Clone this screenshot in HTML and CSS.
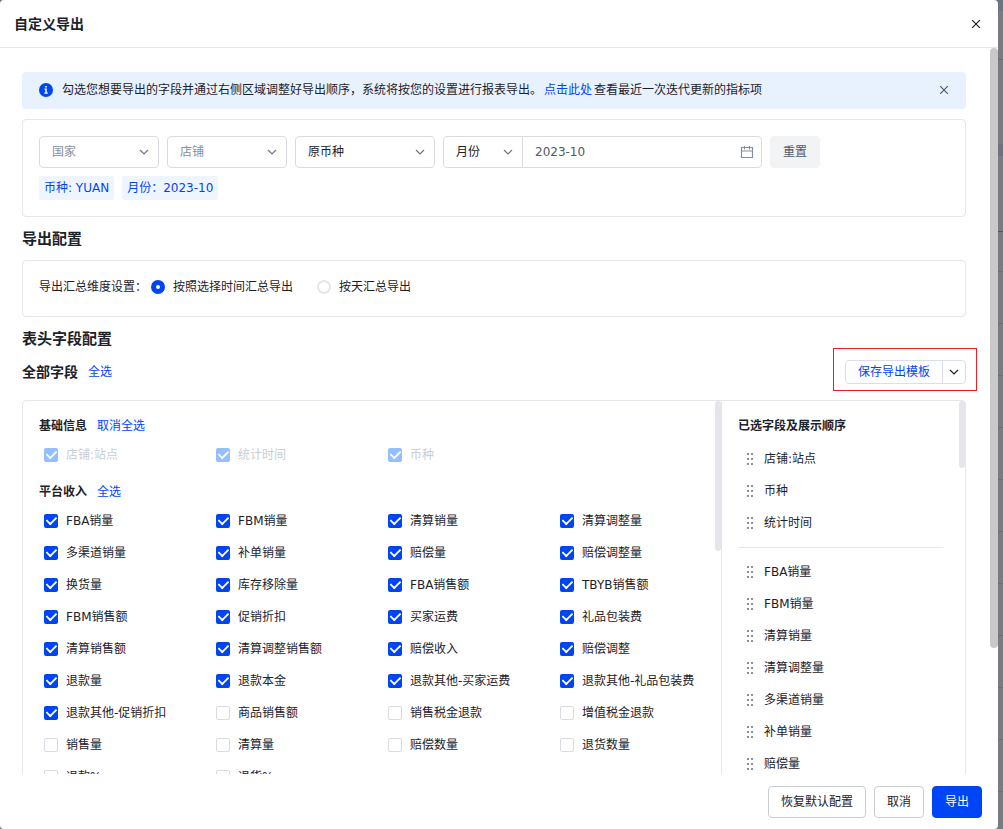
FILE: index.html
```html
<!DOCTYPE html>
<html lang="zh-CN">
<head>
    <meta charset="UTF-8">
    <meta name="viewport" content="width=device-width, initial-scale=1.0">
    <title>自定义导出</title>
    <link rel="stylesheet" href="styles.css">
</head>
<body>

    <svg class="sprite" aria-hidden="true">
        <symbol id="close" viewBox="0 0 10 10"><path d="M1.2 1.2l7.6 7.6M8.8 1.2L1.2 8.8"/></symbol>
        <symbol id="down" viewBox="0 0 10 10"><path d="M1 3l4 4 4-4"/></symbol>
        <symbol id="calendar" viewBox="0 0 14 14"><path d="M1.5 2.5h11v10h-11zM1.5 6h11M4.5 1v3.5M9.5 1v3.5"/></symbol>
    </svg>

    <div class="modal" role="dialog" aria-labelledby="title">
        <header class="modal-header">
            <h1 id="title">自定义导出</h1>
            <button type="button" class="icon-btn" aria-label="关闭"><svg class="icon"><use href="#close"/></svg></button>
        </header>

        <main class="modal-body">
            <div class="content">
                <div class="notice">
                    <svg class="info" viewBox="0 0 14 14"><circle cx="7" cy="7" r="7"/><path d="M6.2 3h1.6v1.6H6.2zM5.5 5.6h2.3v4h1v1.2H5.3V9.6h1V6.8h-.8z"/></svg>
                    <p>勾选您想要导出的字段并通过右侧区域调整好导出顺序，系统将按您的设置进行报表导出。<a href="#">点击此处</a>查看最近一次迭代更新的指标项</p>
                    <button type="button" class="icon-btn muted" aria-label="关闭提示"><svg class="icon"><use href="#close"/></svg></button>
                </div>

                <section class="card filters">
                    <div class="filter-row">
                        <div class="select"><select class="placeholder" aria-label="国家"><option>国家</option></select><svg class="icon"><use href="#down"/></svg></div>
                        <div class="select"><select class="placeholder" aria-label="店铺"><option>店铺</option></select><svg class="icon"><use href="#down"/></svg></div>
                        <div class="select wide"><select aria-label="币种"><option>原币种</option></select><svg class="icon"><use href="#down"/></svg></div>
                        <div class="period">
                            <div class="select unit"><select aria-label="时间单位"><option>月份</option></select><svg class="icon"><use href="#down"/></svg></div>
                            <div class="date"><input type="text" value="2023-10" aria-label="月份"><svg class="icon-calendar"><use href="#calendar"/></svg></div>
                        </div>
                        <button type="button" class="btn-reset">重置</button>
                    </div>
                    <div class="tags">
                        <span class="tag">币种: YUAN</span>
                        <span class="tag">月份：2023-10</span>
                    </div>
                </section>

                <h2>导出配置</h2>
                <section class="card dimension">
                    <span>导出汇总维度设置：</span>
                    <label><input type="radio" name="dimension" checked>按照选择时间汇总导出</label>
                    <label><input type="radio" name="dimension">按天汇总导出</label>
                </section>

                <h2>表头字段配置</h2>
                <div class="toolbar">
                    <h3>全部字段</h3>
                    <a href="#">全选</a>
                    <div class="split-btn">
                        <button type="button" class="save">保存导出模板</button>
                        <button type="button" class="more" aria-label="更多模板"><svg class="icon"><use href="#down"/></svg></button>
                    </div>
                </div>

                <div class="fields">
                    <div class="all-fields">
                        <div class="group-title"><h4>基础信息</h4><a href="#">取消全选</a></div>
                        <div class="checks">
                            <label class="disabled"><input type="checkbox" checked disabled>店铺:站点</label>
                            <label class="disabled"><input type="checkbox" checked disabled>统计时间</label>
                            <label class="disabled"><input type="checkbox" checked disabled>币种</label>
                        </div>
                        <div class="group-title"><h4>平台收入</h4><a href="#">全选</a></div>
                        <div class="checks">
                            <label><input type="checkbox" checked>FBA销量</label>
                            <label><input type="checkbox" checked>FBM销量</label>
                            <label><input type="checkbox" checked>清算销量</label>
                            <label><input type="checkbox" checked>清算调整量</label>
                            <label><input type="checkbox" checked>多渠道销量</label>
                            <label><input type="checkbox" checked>补单销量</label>
                            <label><input type="checkbox" checked>赔偿量</label>
                            <label><input type="checkbox" checked>赔偿调整量</label>
                            <label><input type="checkbox" checked>换货量</label>
                            <label><input type="checkbox" checked>库存移除量</label>
                            <label><input type="checkbox" checked>FBA销售额</label>
                            <label><input type="checkbox" checked>TBYB销售额</label>
                            <label><input type="checkbox" checked>FBM销售额</label>
                            <label><input type="checkbox" checked>促销折扣</label>
                            <label><input type="checkbox" checked>买家运费</label>
                            <label><input type="checkbox" checked>礼品包装费</label>
                            <label><input type="checkbox" checked>清算销售额</label>
                            <label><input type="checkbox" checked>清算调整销售额</label>
                            <label><input type="checkbox" checked>赔偿收入</label>
                            <label><input type="checkbox" checked>赔偿调整</label>
                            <label><input type="checkbox" checked>退款量</label>
                            <label><input type="checkbox" checked>退款本金</label>
                            <label><input type="checkbox" checked>退款其他-买家运费</label>
                            <label><input type="checkbox" checked>退款其他-礼品包装费</label>
                            <label><input type="checkbox" checked>退款其他-促销折扣</label>
                            <label><input type="checkbox">商品销售额</label>
                            <label><input type="checkbox">销售税金退款</label>
                            <label><input type="checkbox">增值税金退款</label>
                            <label><input type="checkbox">销售量</label>
                            <label><input type="checkbox">清算量</label>
                            <label><input type="checkbox">赔偿数量</label>
                            <label><input type="checkbox">退货数量</label>
                            <label><input type="checkbox">退款%</label>
                            <label><input type="checkbox">退货%</label>
                        </div>
                        <div class="thumb thumb-left"></div>
                    </div>

                    <div class="selected">
                        <h4>已选字段及展示顺序</h4>
                        <ul>
                            <li>店铺:站点</li>
                            <li>币种</li>
                            <li>统计时间</li>
                        </ul>
                        <hr>
                        <ul>
                            <li>FBA销量</li>
                            <li>FBM销量</li>
                            <li>清算销量</li>
                            <li>清算调整量</li>
                            <li>多渠道销量</li>
                            <li>补单销量</li>
                            <li>赔偿量</li>
                        </ul>
                        <div class="thumb thumb-right"></div>
                    </div>
                </div>
            </div>
            <div class="scrollbar"></div>
        </main>

        <footer class="modal-footer">
            <button type="button" class="btn">恢复默认配置</button>
            <button type="button" class="btn">取消</button>
            <button type="button" class="btn primary">导出</button>
        </footer>
    </div>

</body>
</html>
```
FILE: styles.css
```css
* {
    box-sizing: border-box;
}
/* dimmed page behind the modal */
body {
    margin: 0;
    height: 100vh;
    padding-right: 5px;
    overflow: hidden;
    background:
        linear-gradient(#6b7480 11px, transparent 11px),
        linear-gradient(transparent 59px, #696c73 59px 60px, transparent 60px 144px, #6f727b 144px 156px, transparent 156px 231px, #1f6d70 231px 232px, transparent 232px),
        repeating-linear-gradient(transparent 0 10px, #6c6f76 10px 11px, transparent 11px 52px) 0 261px no-repeat,
        #787b80;
    color: #1d2129;
    font-family: "DejaVu Sans", "Noto Sans CJK SC", sans-serif;
    font-size: 12px;
    line-height: 18px;
}
h1, h2, h3, h4, p, ul {
    margin: 0;
    padding: 0;
}
h1, h2, h3, h4 {
    font-weight: 600;
}
h1, h3 {
    font-size: 14px;
}
h2 {
    margin: 12px 0 10px;
    font-size: 15px;
    line-height: 21px;
}
h4 {
    font-size: 12px;
}
a {
    color: #0045f5;
    text-decoration: none;
}
button, input, select {
    margin: 0;
    font: inherit;
    color: inherit;
}
button {
    padding: 0;
    cursor: pointer;
}
.sprite {
    display: none;
}
.icon, .icon-calendar {
    display: block;
    flex: none;
    width: 10px;
    height: 10px;
    fill: none;
    stroke: currentColor;
    stroke-width: 1.2;
}
.icon-calendar {
    width: 14px;
    height: 14px;
    color: #86909c;
}
.icon-btn {
    border: none;
    background: none;
}
.icon-btn.muted {
    color: #4e5969;
}

/* modal */
.modal {
    display: flex;
    flex-direction: column;
    height: 100vh;
    background: #fff;
    border-radius: 4px;
}
.modal-header {
    display: flex;
    flex: none;
    align-items: center;
    justify-content: space-between;
    height: 48px;
    padding: 0 17px 0 14px;
    border-bottom: 1px solid #e5e6eb;
}
.modal-body {
    display: flex;
    flex: 1;
    min-height: 0;
    overflow: hidden;
}
.content {
    flex: 1;
    min-width: 0;
    padding: 24px 24px 0 22px;
}
.scrollbar {
    width: 8px;
    height: 600px;
    border-radius: 4px;
    background: #c9c9c9;
}
.modal-footer {
    display: flex;
    flex: none;
    justify-content: flex-end;
    gap: 8px;
    padding: 12px 16px 11px;
}

/* notice */
.notice {
    display: flex;
    align-items: center;
    height: 37px;
    padding: 0 17px 2px;
    border-radius: 4px;
    background: #e8f2ff;
}
.notice p {
    flex: 1;
    margin-left: 9px;
}
.notice a {
    margin: 0 2px;
}
.info {
    width: 14px;
    height: 14px;
    fill: #0045f5;
}
.info path {
    fill: #fff;
}

/* filters */
.card {
    border: 1px solid #e5e6eb;
    border-radius: 4px;
    padding: 16px;
}
.filters {
    margin-top: 10px;
}
.filter-row {
    display: flex;
    gap: 8px;
}
.select, .date {
    position: relative;
    width: 120px;
    height: 32px;
}
.select select, .date input {
    width: 100%;
    height: 100%;
    padding: 0 12px;
    border: 1px solid #d9dbe0;
    border-radius: 4px;
    background: #fff;
    appearance: none;
}
.select .placeholder {
    color: #86909c;
}
.select .icon {
    position: absolute;
    top: 11px;
    right: 10px;
    color: #6b7785;
    pointer-events: none;
}
.select.wide {
    width: 140px;
}
.period {
    display: flex;
}
.select.unit {
    width: 80px;
}
.unit select {
    border-radius: 4px 0 0 4px;
}
.date {
    width: 240px;
    margin-left: -1px;
}
.date input {
    border-radius: 0 4px 4px 0;
    color: #4e5969;
}
.icon-calendar {
    position: absolute;
    top: 9px;
    right: 8px;
}
.btn-reset {
    width: 50px;
    border: none;
    border-radius: 4px;
    background: #f2f3f5;
    color: #4e5969;
}
.tags {
    display: flex;
    gap: 8px;
    margin-top: 8px;
}
.tag {
    padding: 0 5px;
    border-radius: 2px;
    background: #eff5ff;
    color: #0045f5;
    line-height: 24px;
}

/* dimension */
.dimension {
    display: flex;
    padding-bottom: 19px;
    line-height: 20px;
}
.dimension label {
    display: flex;
    align-items: center;
    gap: 8px;
    margin-right: 24px;
}
.dimension span {
    margin-right: 4px;
}
input[type="radio"] {
    appearance: none;
    width: 14px;
    height: 14px;
    border: 2px solid #e5e6eb;
    border-radius: 50%;
}
input[type="radio"]:checked {
    border: 5px solid #0045f5;
}

/* toolbar */
.toolbar {
    display: flex;
    align-items: center;
    gap: 10px;
    margin-bottom: 16px;
}
.split-btn {
    position: relative;
    display: flex;
    height: 24px;
    margin-left: auto;
    border: 1px solid #d9dee8;
    border-radius: 4px;
}
.split-btn::after {
    content: "";
    position: absolute;
    inset: -13px -12px -8px -13px;
    border: 1px solid #ee1c25;
    pointer-events: none;
}
.split-btn button {
    border: none;
    background: none;
}
.split-btn .save {
    padding: 0 12px;
    color: #0045f5;
}
.split-btn .more {
    padding: 0 6px;
    border-left: 1px solid #d9dee8;
}

/* field lists */
.fields {
    display: flex;
    height: 480px;
    border: 1px solid #e5e6eb;
    border-radius: 4px;
}
.all-fields, .selected {
    position: relative;
    padding: 16px 0 0 16px;
    overflow: hidden;
}
.all-fields {
    flex: 1;
    border-right: 1px solid #e5e6eb;
}
.selected {
    width: 243px;
}
.group-title {
    display: flex;
    gap: 10px;
}
.checks {
    display: grid;
    grid-template-columns: repeat(3, 1fr) 161px;
    margin: 4px 0 12px 5px;
}
.group-title + .checks:last-of-type {
    margin-bottom: 0;
}
.checks label {
    display: flex;
    align-items: center;
    gap: 8px;
    height: 32px;
    white-space: nowrap;
}
.checks .disabled {
    color: #c9cdd4;
}
input[type="checkbox"] {
    display: grid;
    place-items: center;
    appearance: none;
    width: 14px;
    height: 14px;
    border: 1px solid #d9dbe2;
    border-radius: 2px;
}
input[type="checkbox"]:checked {
    border: none;
    background: #0045f5;
}
input[type="checkbox"]:checked::after {
    content: "";
    width: 9px;
    height: 5px;
    margin-bottom: 3px;
    border: solid #fff;
    border-width: 0 0 2px 2px;
    transform: rotate(-45deg) scale(0.9);
}
input[type="checkbox"]:disabled {
    background: #94bfff;
}
.selected ul {
    list-style: none;
}
.selected h4 {
    margin-bottom: 8px;
}
.selected li {
    display: flex;
    align-items: center;
    gap: 10px;
    height: 32px;
    padding-left: 8px;
}
/* drag handle, 2 x 3 dots */
.selected li::before {
    content: "";
    width: 8px;
    height: 15px;
    background: radial-gradient(circle at 2px 2px, #86909c 1px, transparent 1px) 0 0 / 4px 5px;
}
.selected hr {
    height: 1px;
    margin: 8px 22px 8px 0;
    border: none;
    background: #e5e6eb;
}
.thumb {
    position: absolute;
    top: 0;
    right: 0;
    width: 6px;
    border-radius: 3px;
    background: #e5e6eb;
}
.thumb-left {
    height: 150px;
}
.thumb-right {
    height: 67px;
}

/* footer */
.btn {
    height: 32px;
    padding: 0 12px;
    border: 1px solid #c9cdd4;
    border-radius: 4px;
    background: #fff;
}
.btn.primary {
    border-color: #0045f5;
    background: #0045f5;
    color: #fff;
}
```
